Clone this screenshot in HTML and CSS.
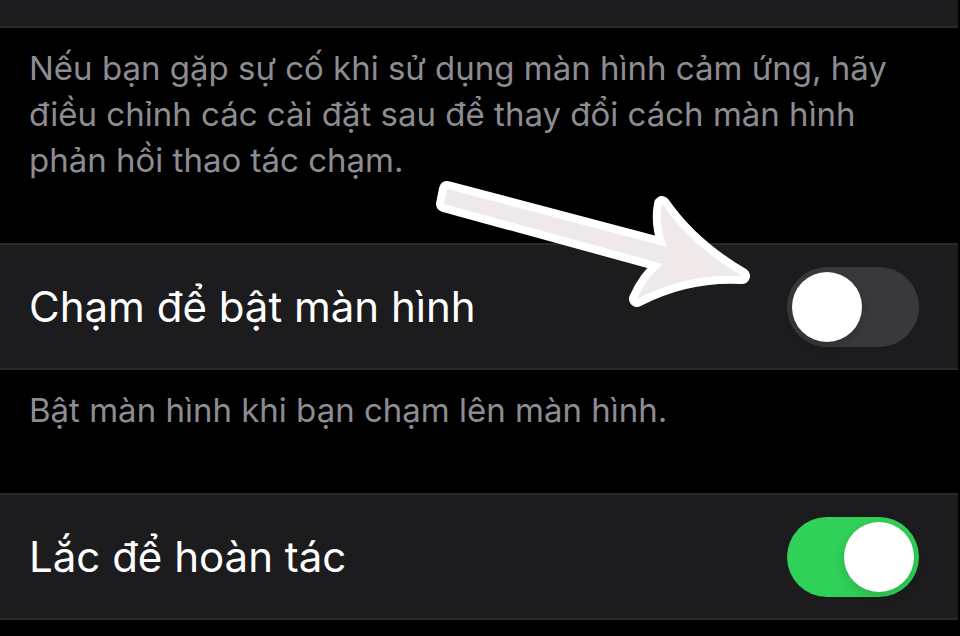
FILE: index.html
```html
<!DOCTYPE html>
<html lang="vi">
<head>
    <meta charset="UTF-8">
    <meta name="viewport" content="width=device-width, initial-scale=1.0">
    <title>Cảm ứng</title>
    <link rel="stylesheet" href="styles.css">
</head>
<body>
    <main class="settings">
        <div class="row-end"></div>
        <p class="note">Nếu bạn gặp sự cố khi sử dụng màn hình cảm ứng, hãy điều chỉnh các cài đặt sau để thay đổi cách màn hình phản hồi thao tác chạm.</p>

        <div class="row">
            <label class="row-label" for="tapToWake">Chạm để bật màn hình</label>
            <input type="checkbox" class="switch" id="tapToWake" role="switch">
            <svg class="arrow" width="350" height="150" viewBox="0 0 350 150" aria-hidden="true">
                <path class="arrow-edge" d="M27 19 L247 77 Q238 55 242 34 Q271 76 322 106 Q266 103 217 129 Q226 108 243 94 L24 34 Z"/>
                <path class="arrow-fill" d="M27 19 L247 77 Q238 55 242 34 Q271 76 322 106 Q266 103 217 129 Q226 108 243 94 L24 34 Z"/>
            </svg>
        </div>
        <p class="note">Bật màn hình khi bạn chạm lên màn hình.</p>

        <div class="row">
            <label class="row-label" for="shakeToUndo">Lắc để hoàn tác</label>
            <input type="checkbox" class="switch" id="shakeToUndo" role="switch" checked>
        </div>
    </main>
</body>
</html>
```
FILE: styles.css
```css
* {
  box-sizing: border-box;
}

body {
  margin: 0;
  background-color: #000;
  color: #fff;
  font-family: Inter, "Noto Sans", sans-serif;
}

.settings {
  margin-right: 2px;
}

.row-end {
  height: 28px;
  background-color: #1c1c1e;
  border-bottom: 2px solid #2a2a2b;
}

.note {
  margin: 0;
  padding: 17px 29px 60px;
  color: #8d8c92;
  font-size: 33px;
  line-height: 46px;
}

.row {
  position: relative;
  display: flex;
  align-items: center;
  justify-content: space-between;
  height: 127px;
  padding: 0 39px 0 29px;
  background-color: #1c1c1e;
  border-top: 2px solid #2a2a2b;
  border-bottom: 2px solid #2a2a2b;
}

.row-label {
  font-size: 42px;
  line-height: 56px;
}

.switch {
  appearance: none;
  flex: none;
  width: 132px;
  height: 80px;
  margin: 0;
  padding: 5px;
  border-radius: 40px;
  background-color: #39393d;
  cursor: pointer;
}

.switch::before {
  content: "";
  display: block;
  width: 70px;
  height: 70px;
  border-radius: 50%;
  background-color: #fff;
  box-shadow: 0 4px 12px rgba(0, 0, 0, 0.15);
}

.switch:checked {
  background-color: #30d158;
}

.switch:checked::before {
  margin-left: auto;
}

/* pointer laid over the row, next to its switch */
.arrow {
  position: absolute;
  right: 188px;
  top: -75px;
  pointer-events: none;
}

.arrow-edge {
  fill: #fff;
  stroke: #fff;
  stroke-width: 16px;
  stroke-linejoin: round;
}

.arrow-fill {
  fill: #efe9ea;
}
```
